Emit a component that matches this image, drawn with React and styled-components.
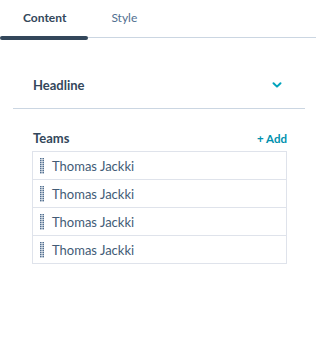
import styled, { createGlobalStyle } from "styled-components";

const GlobalStyle = createGlobalStyle`
  body {
    margin: 0;
    background: #ffffff;
    font-family: "Lato", "Liberation Sans", sans-serif;
    color: #33475b;
  }
`

const Panel = styled.div`
  width: 316px;
  min-height: 352px;
  background: #ffffff;
`

const TabBar = styled.div`
  display: flex;
  height: 37px;
  border-bottom: 1px solid #cbd6e2;
`

const Tab = styled.div`
  position: relative;
  display: flex;
  align-items: center;
  padding: 0 22px 2px 23px;
  font-size: 12px;
  font-weight: ${props => (props.$active ? 700 : 400)};
  color: ${props => (props.$active ? "#33475b" : "#516f90")};

  &::after {
    content: "";
    display: ${props => (props.$active ? "block" : "none")};
    position: absolute;
    left: 0;
    right: 0;
    bottom: -3px;
    height: 4px;
    border-radius: 2px;
    background: #33475b;
  }
`

const Body = styled.div`
  padding: 24px 11px 0 13px;
`

const SectionHeader = styled.div`
  display: flex;
  align-items: center;
  justify-content: space-between;
  height: 46px;
  padding: 0 23px 0 20px;
  border-bottom: 1px solid #cbd6e2;
`

const HeaderTitle = styled.span`
  font-size: 13px;
  font-weight: 700;
  color: #33475b;
`

const Chevron = styled.svg`
  width: 10px;
  height: 10px;
  margin-top: -1px;
`

const Teams = styled.div`
  padding: 20px 18px 0 19px;
`

const TeamsHeader = styled.div`
  display: flex;
  align-items: center;
  justify-content: space-between;
  height: 18px;
  margin-bottom: 4px;
  padding-left: 1px;
`

const AddLink = styled.span`
  font-size: 11.5px;
  font-weight: 700;
  color: #0091ae;
`

const List = styled.div`
  border: 1px solid #dfe3eb;
`

const Row = styled.div`
  display: flex;
  align-items: center;
  gap: 8px;
  height: 27px;
  padding-left: 7px;
  font-size: 13px;
  color: #425b76;
  border-bottom: 1px solid #dfe3eb;

  &:last-child {
    border-bottom: none;
  }
`

const Handle = styled.svg`
  width: 4px;
  height: 16px;
  flex-shrink: 0;
`

const DragHandle = () => (
  <Handle viewBox="0 0 4 16">
    {Array.from({ length: 8 }).map((_, i) => (
      <g key={i} fill="#516f90">
        <rect x="0" y={i * 2} width="1.6" height="1.4" />
        <rect x="2.4" y={i * 2} width="1.6" height="1.4" />
      </g>
    ))}
  </Handle>
)

const teams = ["Thomas Jackki", "Thomas Jackki", "Thomas Jackki", "Thomas Jackki"]

export default function App() {
  return (
    <Panel>
      <GlobalStyle />
      <TabBar>
        <Tab $active>Content</Tab>
        <Tab>Style</Tab>
      </TabBar>
      <Body>
        <SectionHeader>
          <HeaderTitle>Headline</HeaderTitle>
          <Chevron viewBox="0 0 10 10">
            <path d="M1.5 3.2 L5 6.6 L8.5 3.2" fill="none" stroke="#00a4bd" strokeWidth="2" strokeLinecap="round" strokeLinejoin="round" />
          </Chevron>
        </SectionHeader>
        <Teams>
          <TeamsHeader>
            <HeaderTitle>Teams</HeaderTitle>
            <AddLink>+ Add</AddLink>
          </TeamsHeader>
          <List>
            {teams.map((name, i) => (
              <Row key={i}>
                <DragHandle />
                {name}
              </Row>
            ))}
          </List>
        </Teams>
      </Body>
    </Panel>
  )
}
